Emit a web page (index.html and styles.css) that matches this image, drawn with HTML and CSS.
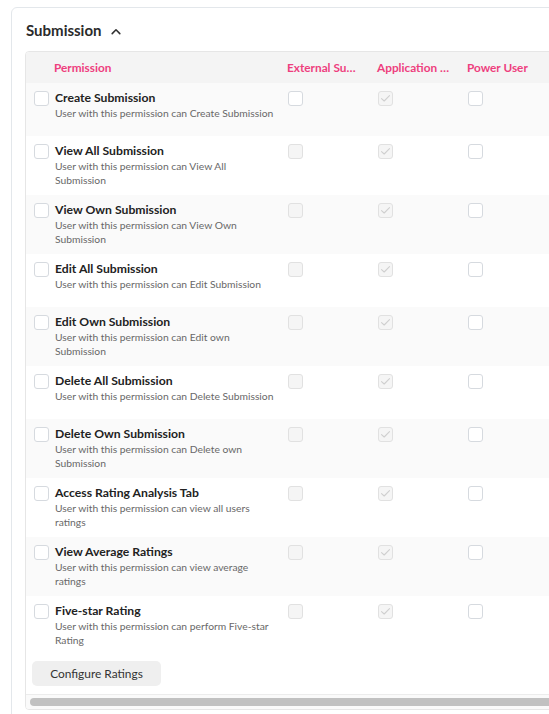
FILE: index.html
```html
<!DOCTYPE html>
<html>
<head>
<meta charset="utf-8">
<link rel="stylesheet" href="styles.css">
</head>
<body>
<div class="page">
  <div class="card">
    <div class="card-head">
      <h2 class="card-title">Submission</h2>
      <svg class="chev" width="10" height="7" viewBox="0 0 10 7"><path d="M1.2 5.6 L5 1.8 L8.8 5.6" fill="none" stroke="#333" stroke-width="1.6" stroke-linecap="round" stroke-linejoin="round"/></svg>
    </div>
    <div class="table-wrap">
      <table class="perm-table">
        <colgroup>
          <col class="c-perm"><col class="c-role"><col class="c-role"><col class="c-role"><col class="c-rest">
        </colgroup>
        <thead>
          <tr>
            <th class="th-perm">Permission</th>
            <th>External Su…</th>
            <th>Application …</th>
            <th>Power User</th>
            <th></th>
          </tr>
        </thead>
        <tbody id="rows"></tbody>
      </table>
      <div class="actions"><button class="btn">Configure Ratings</button></div>
      <div class="scroll-track"><div class="scroll-thumb"></div></div>
    </div>
  </div>
</div>
<script src="app.js"></script>
</body>
</html>
```

FILE: app.js
```js
var data = [
  ["Create Submission", "User with this permission can Create Submission", true],
  ["View All Submission", "User with this permission can View All Submission", false],
  ["View Own Submission", "User with this permission can View Own Submission", false],
  ["Edit All Submission", "User with this permission can Edit Submission", false],
  ["Edit Own Submission", "User with this permission can Edit own Submission", false],
  ["Delete All Submission", "User with this permission can Delete Submission", false],
  ["Delete Own Submission", "User with this permission can Delete own Submission", false],
  ["Access Rating Analysis Tab", "User with this permission can view all users ratings", false],
  ["View Average Ratings", "User with this permission can view average ratings", false],
  ["Five-star Rating", "User with this permission can perform Five-star Rating", false]
];
var check = '<svg width="11" height="9" viewBox="0 0 11 9"><path d="M1.5 4.6 L4.2 7 L9.5 1.6" fill="none" stroke="#cfcfcf" stroke-width="1.1" stroke-linecap="round" stroke-linejoin="round"/></svg>';
var html = "";
data.forEach(function (r) {
  html += '<tr>' +
    '<td class="td-perm"><div class="perm"><span class="cb"></span><div class="perm-text"><div class="perm-name">' + r[0] + '</div><div class="perm-desc">' + r[1] + '</div></div></div></td>' +
    '<td><span class="cb' + (r[2] ? '' : ' cb-dis') + '"></span></td>' +
    '<td><span class="cb cb-dis cb-on">' + check + '</span></td>' +
    '<td><span class="cb"></span></td>' +
    '<td></td>' +
    '</tr>';
});
document.getElementById("rows").innerHTML = html;
```

FILE: styles.css
```css
html, body {
  margin: 0;
  padding: 0;
  overflow: hidden;
  background: #ffffff;
}
body {
  font-family: Lato, "Noto Sans", sans-serif;
  color: #2b2b2b;
}
.page {
  padding: 7px 0 0 11px;
}
.card {
  width: 620px;
  height: 760px;
  border: 1px solid #e3e7eb;
  border-radius: 6px;
  padding: 0 13px;
  box-sizing: border-box;
}
.card-head {
  display: flex;
  align-items: center;
  gap: 9px;
  height: 43px;
  padding-left: 1px;
  padding-top: 1px;
  box-sizing: border-box;
}
.card-title {
  margin: 0;
  font-size: 15px;
  font-weight: 700;
  color: #2b2b2b;
  line-height: 20px;
}
.chev {
  display: block;
  margin-top: 2px;
}
.table-wrap {
  border: 1px solid #e6e6e6;
  border-radius: 4px;
  overflow: hidden;
}
.perm-table {
  border-collapse: collapse;
  table-layout: fixed;
  width: 700px;
}
.c-perm { width: 254px; }
.c-role { width: 90px; }
.c-rest { width: 176px; }
.perm-table th {
  height: 31px;
  padding: 0 4px 0 7px;
  background: #f4f4f4;
  color: #ee3f7e;
  font-size: 11.8px;
  font-weight: 700;
  text-align: left;
  white-space: nowrap;
  overflow: hidden;
  text-overflow: clip;
  vertical-align: middle;
}
.perm-table th.th-perm {
  padding-left: 28px;
}
.perm-table tbody tr {
  height: 53px;
}
.perm-table tbody tr:nth-child(odd) {
  background: #fafafa;
}
.perm-table tbody tr:nth-child(even) {
  background: #ffffff;
}
.perm-table td {
  vertical-align: top;
  padding: 6px 6px 8px 8px;
}
.perm {
  display: flex;
  gap: 6px;
}
.perm-text {
  min-width: 0;
}
.perm-name {
  font-size: 12.2px;
  font-weight: 700;
  line-height: 17px;
  color: #222;
}
.perm-desc {
  font-size: 10.3px;
  line-height: 14px;
  color: #686868;
}
.cb {
  display: flex;
  align-items: center;
  justify-content: center;
  flex: none;
  width: 15px;
  height: 15px;
  box-sizing: border-box;
  border: 1px solid #d6dadf;
  border-radius: 3px;
  background: #fff;
  margin-top: 2px;
}
.cb-dis {
  background: #f5f5f5;
  border-color: #e1e1e1;
}
.cb-on svg {
  display: block;
}
.actions {
  padding: 6px 0 8px 6px;
}
.btn {
  display: block;
  width: 129px;
  height: 25px;
  border: none;
  border-radius: 5px;
  background: #efefef;
  color: #333;
  font-family: Lato, "Noto Sans", sans-serif;
  font-size: 11.9px;
  padding: 0;
}
.scroll-track {
  border-top: 1px solid #ececec;
  padding: 3px 0 3px 4px;
  background: #fafafa;
}
.scroll-thumb {
  height: 8px;
  border-radius: 4px;
  background: #c1c1c1;
}
```
